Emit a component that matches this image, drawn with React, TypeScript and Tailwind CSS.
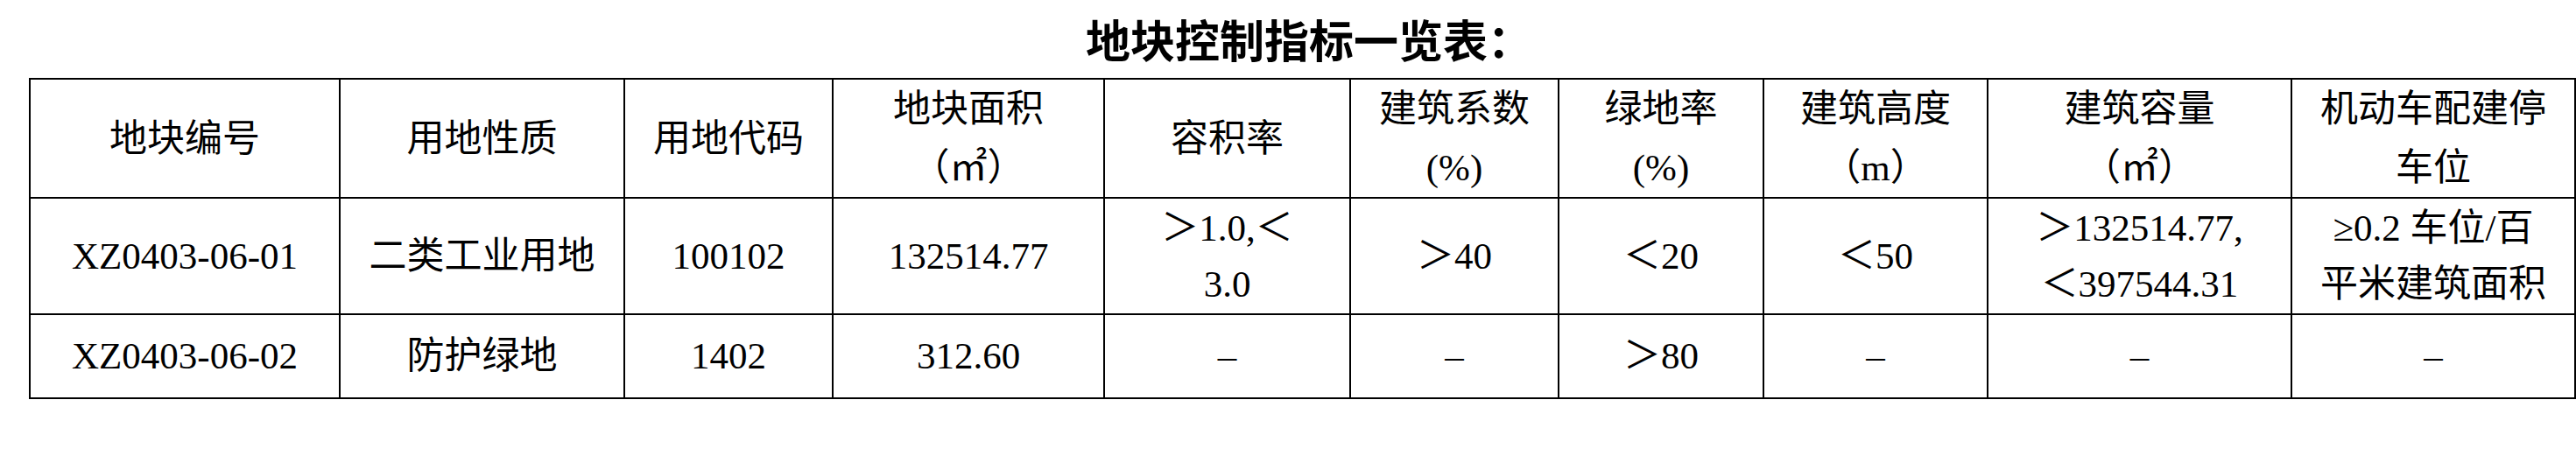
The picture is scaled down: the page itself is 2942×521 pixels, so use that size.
import React from "react";

type Cell = React.ReactNode;

const cols = [354, 325, 238, 310, 281, 238, 234, 256, 347, 324];

const header: Cell[] = [
  "地块编号",
  "用地性质",
  "用地代码",
  <>地块面积<br />（㎡）</>,
  "容积率",
  <>建筑系数<br />(%)</>,
  <>绿地率<br />(%)</>,
  <>建筑高度<br />（m）</>,
  <>建筑容量<br />（㎡）</>,
  <>机动车配建停<br />车位</>,
];

const rows: Cell[][] = [
  [
    "XZ0403-06-01",
    "二类工业用地",
    "100102",
    "132514.77",
    <>＞1.0,＜<br />3.0</>,
    "＞40",
    "＜20",
    "＜50",
    <>＞132514.77,<br />＜397544.31</>,
    <>≥0.2 车位/百<br />平米建筑面积</>,
  ],
  ["XZ0403-06-02", "防护绿地", "1402", "312.60", "–", "–", "＞80", "–", "–", "–"],
];

const App: React.FC = () => {
  return (
    <div className="w-[2942px] h-[521px] bg-white text-black overflow-hidden">
      <div className="h-[89px] pl-[48px] flex items-center justify-center">
        <h1 className="text-[51px] leading-none font-bold font-['Noto_Sans_CJK_SC',sans-serif]">
          地块控制指标一览表：
        </h1>
      </div>

      <table className="ml-[33px] w-[2909px] table-fixed border-collapse border-2 border-black font-['Liberation_Serif','Noto_Sans_CJK_SC',serif] text-[43px]">
        <colgroup>
          {cols.map((w, i) => (
            <col key={i} style={{ width: w }} />
          ))}
        </colgroup>
        <thead>
          <tr className="h-[132px]">
            {header.map((c, i) => (
              <th key={i} className="border-2 border-black p-0 font-normal text-center align-middle leading-[67px] whitespace-nowrap">
                {c}
              </th>
            ))}
          </tr>
        </thead>
        <tbody>
          {rows.map((r, ri) => (
            <tr key={ri} className={ri === 0 ? "h-[133px]" : "h-[96px]"}>
              {r.map((c, i) => (
                <td key={i} className="border-2 border-black p-0 text-center align-middle leading-[64px] whitespace-nowrap">
                  {c}
                </td>
              ))}
            </tr>
          ))}
        </tbody>
      </table>
    </div>
  );
};

export default App;
